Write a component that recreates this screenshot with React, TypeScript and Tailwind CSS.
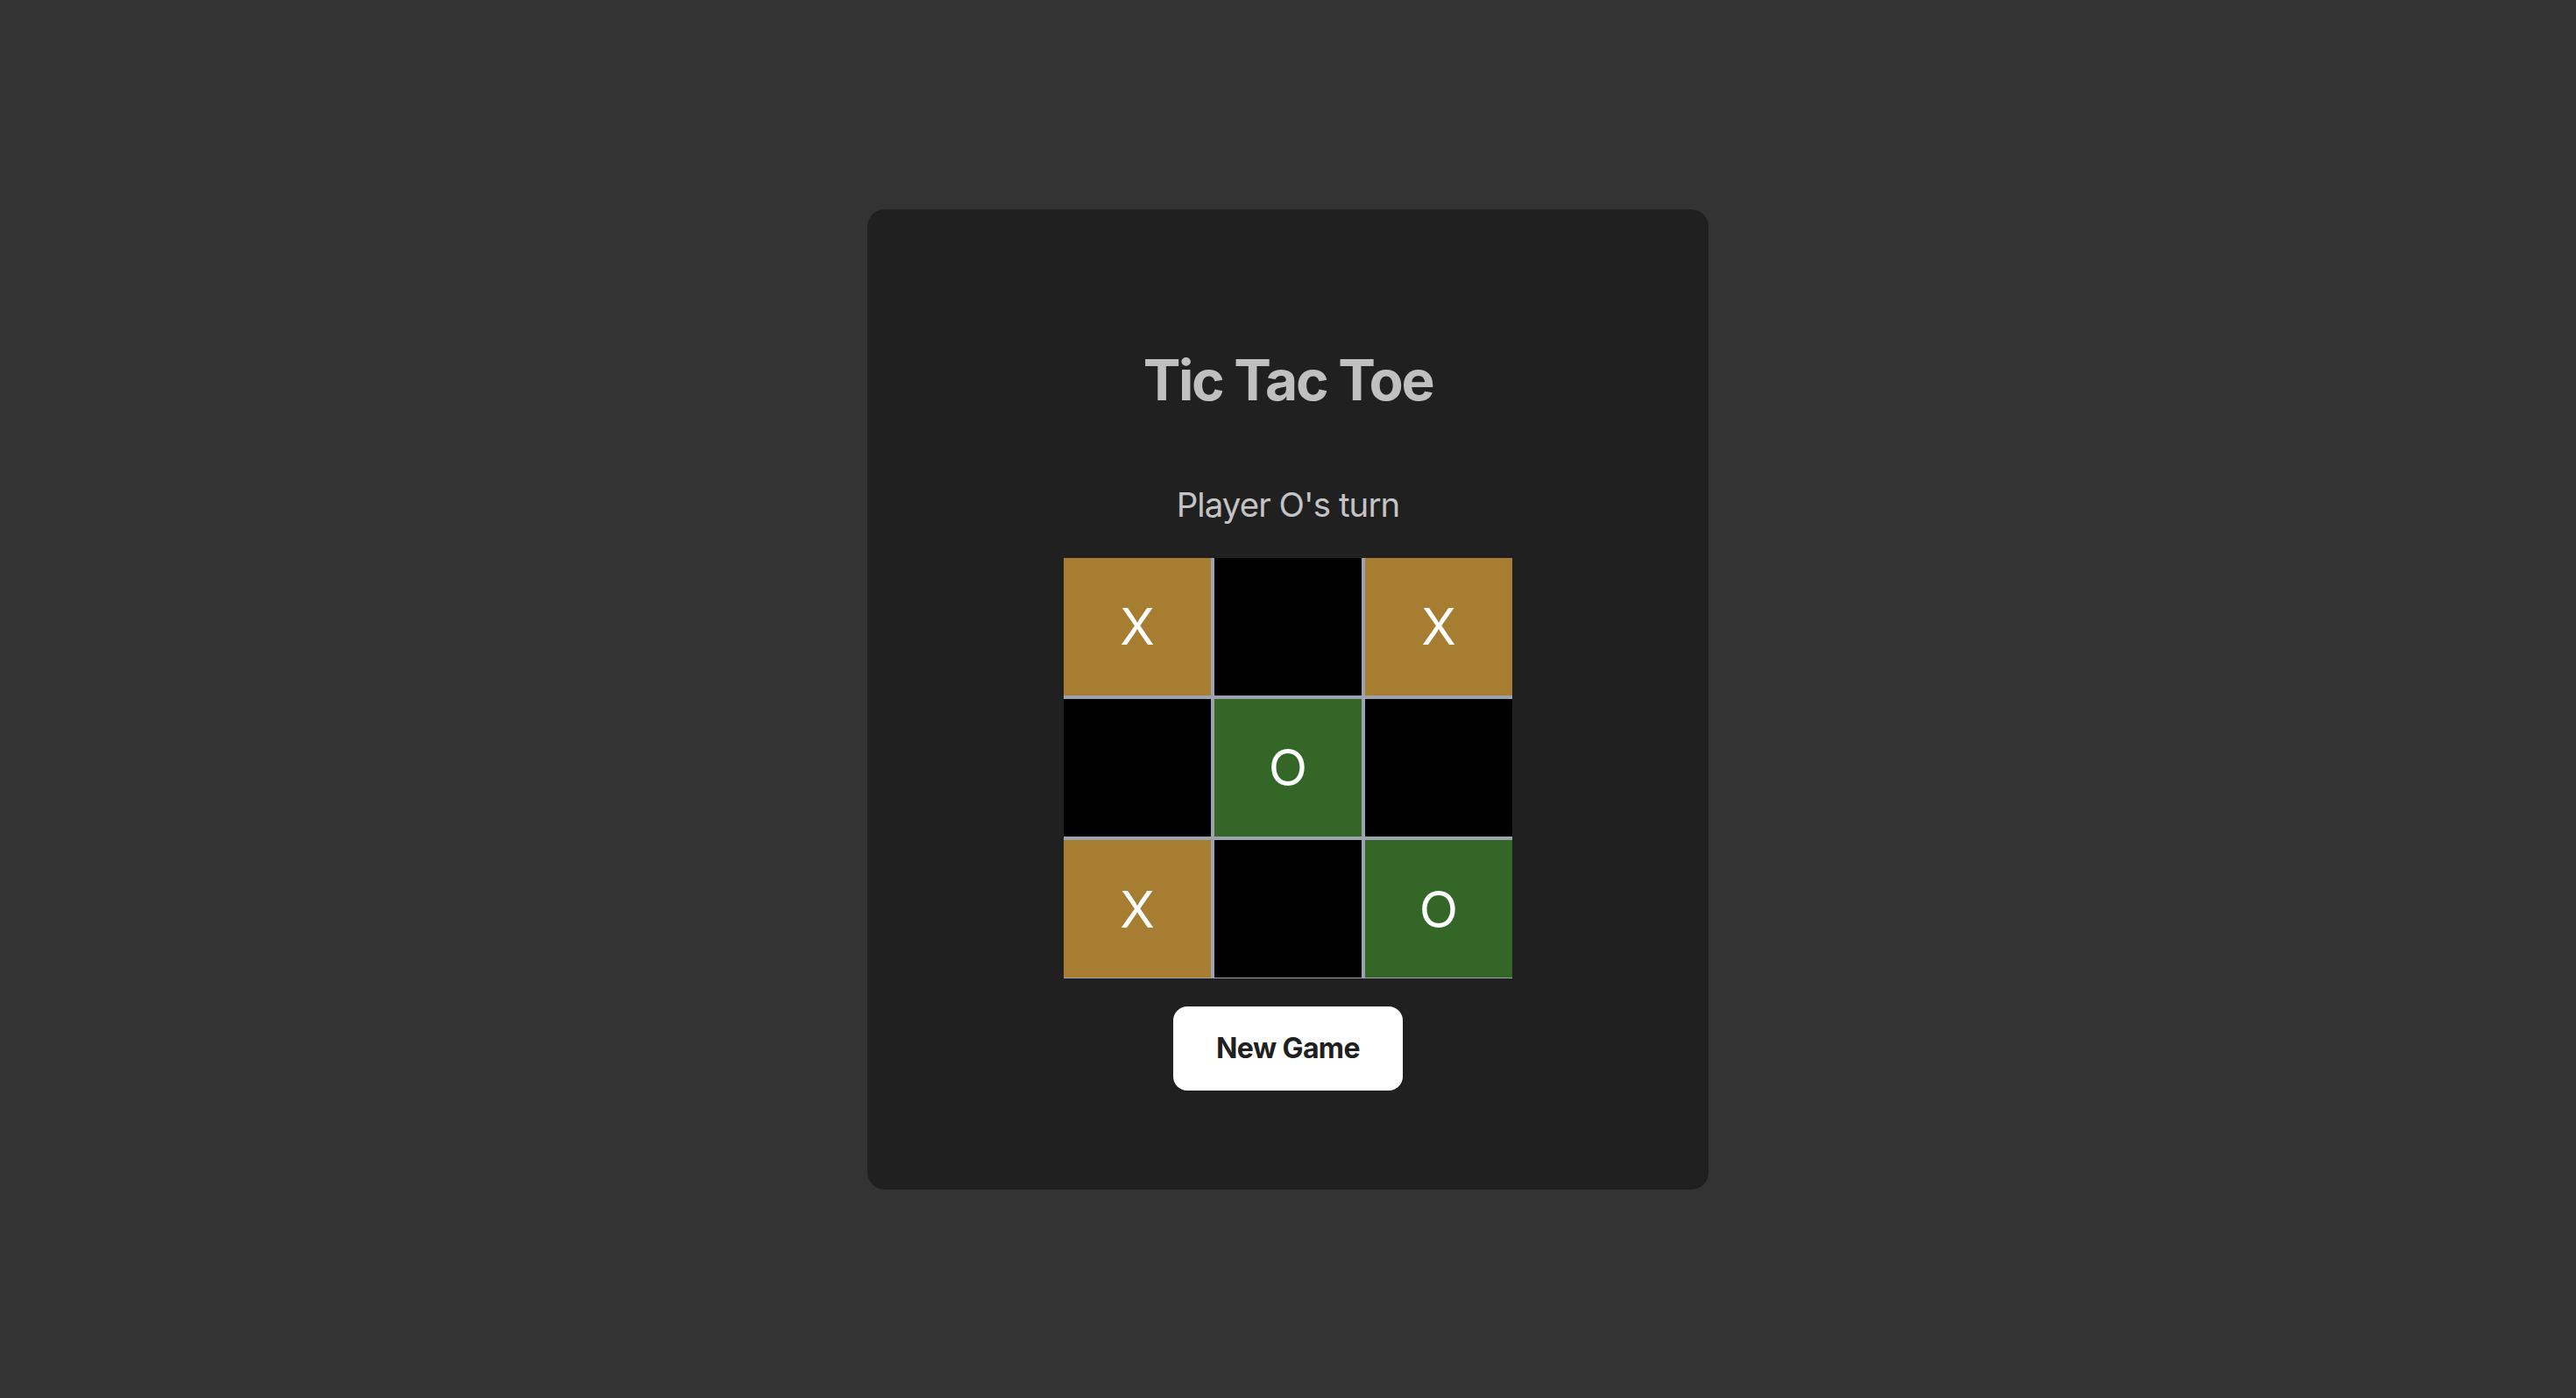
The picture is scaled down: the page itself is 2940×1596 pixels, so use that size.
const board = ["X", "", "X", "", "O", "", "X", "", "O"];

function Cell({ value }: { value: string }) {
  const bg =
    value === "X" ? "bg-[#a77d32]" : value === "O" ? "bg-[#336627]" : "bg-black";
  return (
    <div
      className={`${bg} flex items-center justify-center text-white text-[58px] leading-none font-normal`}
    >
      {value}
    </div>
  );
}

export default function App() {
  return (
    <div className="min-h-screen w-full bg-[#333333] flex items-center justify-center font-['Inter',sans-serif]">
      <div className="w-[960px] bg-[#202020] rounded-[20px] flex flex-col items-center pt-[156px] pb-[113px]">
        <h1 className="text-[64px] font-bold text-[#c0c0c0] leading-[78px] tracking-[-2.3px] mb-[80px]">
          Tic Tac Toe
        </h1>
        <p className="text-[38.4px] text-[#c4c4c4] leading-[46px] tracking-[-0.9px] mb-[38px]">
          Player O's turn
        </p>
        <div className="w-[512px] h-[480px] grid grid-cols-3 grid-rows-3 gap-[4px] bg-[#9ca3af] mb-[32px]">
          {board.map((v, i) => (
            <Cell key={i} value={v} />
          ))}
        </div>
        <button className="w-[262px] h-[96px] bg-white rounded-[16px] text-[32px] font-bold text-[#202020] leading-[38px] tracking-[-0.6px]">
          New Game
        </button>
      </div>
    </div>
  );
}
